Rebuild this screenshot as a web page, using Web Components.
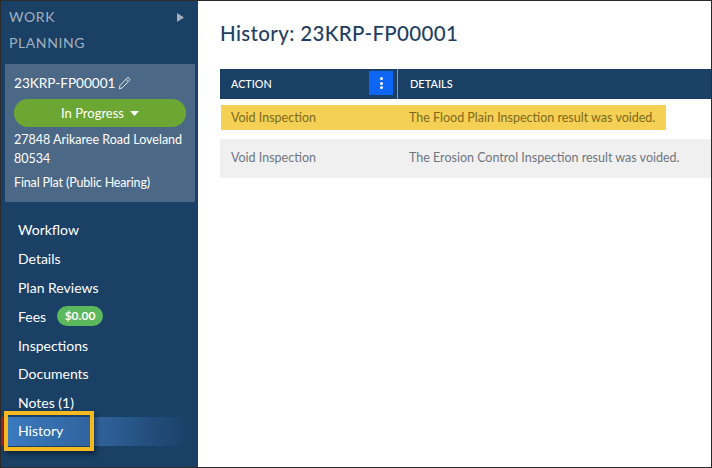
<!DOCTYPE html>
<html>
<head>
<meta charset="utf-8">
<style>
  html, body { margin: 0; height: 100%; }
  body { font-family: "Lato", "Liberation Sans", sans-serif; overflow: hidden; }
</style>
</head>
<body>
<app-shell>
  <side-nav slot="side"></side-nav>
  <history-view slot="main"></history-view>
</app-shell>

<script>
class AppShell extends HTMLElement {
  connectedCallback() {
    const shadow = this.attachShadow({ mode: "open" });
    shadow.innerHTML = `
      <style>
        :host {
          display: grid;
          grid-template-columns: 197px 1fr;
          box-sizing: border-box;
          width: 712px;
          height: 468px;
          border: 1px solid #2b2b2b;
          background: #fff;
        }
      </style>
      <slot name="side"></slot>
      <slot name="main"></slot>
    `;
  }
}

class SideNav extends HTMLElement {
  connectedCallback() {
    const shadow = this.attachShadow({ mode: "open" });
    const items = [
      ["Workflow"], ["Details"], ["Plan Reviews"], ["Fees", "badge"],
      ["Inspections"], ["Documents"], ["Notes (1)"], ["History", "active"],
    ];
    const rows = items.map(([label, kind]) => {
      if (kind === "badge") return `<a>${label}<span class="badge">$0.00</span></a>`;
      if (kind === "active") return `<a class="active"><span class="focus">${label}</span></a>`;
      return `<a>${label}</a>`;
    }).join("");
    shadow.innerHTML = `
      <style>
        :host {
          display: block;
          height: 100%;
          background: #1a4066;
          color: #fff;
          font-size: 14px;
          overflow: hidden;
        }
        .module {
          display: flex;
          justify-content: space-between;
          padding: 0 14px 0 8px;
          color: #a3b0be;
          font-size: 14px;
          letter-spacing: 0.6px;
          line-height: 26px;
        }
        .module.top { padding-top: 3px; }
        .module svg { margin-top: 9px; }
        .card {
          margin: 8px 3px 0 4px;
          padding: 9px 0 0 9px;
          height: 138px;
          box-sizing: border-box;
          background: #4c6887;
          font-size: 12.5px;
        }
        .num { display: flex; align-items: center; gap: 3px; font-size: 13.6px; line-height: 20px; }
        .status {
          display: flex; align-items: center; justify-content: center; gap: 6px;
          height: 28px; margin: 6px 9px 0 0;
          border-radius: 14px;
          background: #6ca633;
          font-size: 13px;
        }
        .addr { margin-top: 3px; line-height: 19px; }
        .type { margin-top: 5px; line-height: 19px; letter-spacing: -0.15px; }
        nav { display: flex; flex-direction: column; margin-top: 13.5px; }
        a {
          display: flex; align-items: center;
          height: 28.8px;
          padding-left: 17px;
          font-size: 14px;
        }
        .badge {
          margin-left: 11px; padding: 0 7.5px;
          height: 20px; line-height: 20px;
          border-radius: 10px;
          background: #5cb85c;
          font-size: 12px; font-weight: 700;
        }
        a.active {
          height: 29px;
          padding-left: 0;
          border-left: 3px solid #a32020;
          background: linear-gradient(90deg, #3a7bc0 0%, #2f6199 50%, #1a4066 95%);
        }
        .focus {
          box-sizing: border-box;
          width: 90px; height: 40px;
          margin-top: -1px;
          padding-left: 10px;
          line-height: 32px;
          border: 4px solid #f5b922;
          box-shadow: 2px 3px 5px rgba(0,0,0,.45);
        }
      </style>
      <div class="module top">WORK
        <svg width="7" height="9" viewBox="0 0 7 9"><path d="M0 0l7 4.5L0 9z" fill="#a3b0be"/></svg>
      </div>
      <div class="module">PLANNING</div>
      <div class="card">
        <div class="num">23KRP-FP00001
          <svg width="13" height="14" viewBox="0 0 13 14" fill="none" stroke="#dfe5ea" stroke-width="1"><path d="M2 9.5L9 2.2a1.3 1.3 0 0 1 2 0l.4.4a1.3 1.3 0 0 1 0 1.9L4.3 11.8 1.3 12.8zM8 3.3l2.6 2.6"/></svg>
        </div>
        <div class="status">In Progress
          <svg width="9" height="5" viewBox="0 0 9 5"><path d="M0 0h9L4.5 5z" fill="#fff"/></svg>
        </div>
        <div class="addr">27848 Arikaree Road Loveland 80534</div>
        <div class="type">Final Plat (Public Hearing)</div>
      </div>
      <nav>${rows}</nav>
    `;
  }
}

class HistoryView extends HTMLElement {
  connectedCallback() {
    const shadow = this.attachShadow({ mode: "open" });
    shadow.innerHTML = `
      <style>
        :host { display: block; padding: 0 0 0 22px; overflow: hidden; }
        h1 {
          margin: 19px 0 0;
          color: #1f3f63;
          font-size: 20.5px; font-weight: 500; line-height: 26px;
          letter-spacing: 0.36px;
        }
        .head {
          display: grid; grid-template-columns: 178px 1fr;
          height: 30px; margin-top: 23px;
          background: #1a4066; color: #fff;
          font-size: 10.8px; font-weight: 500;
        }
        .head > div { display: flex; align-items: center; padding: 0 0 2px 11px; }
        .head .a { justify-content: space-between; padding-right: 4px; border-right: 1px solid #8a9bad; }
        .head .d { padding-left: 12px; font-size: 11px; }
        .kebab {
          display: flex; flex-direction: column; align-items: center; justify-content: center; gap: 1.5px;
          width: 24px; height: 24px;
          background: #0d66f5;
        }
        .kebab i { width: 3px; height: 3px; border-radius: 50%; background: #fff; }
        .row { display: grid; font-size: 12.5px; align-items: center; }
        .row.hl {
          width: 445px; height: 25px; margin: 6px 0 0 1px;
          background: #f4d054; color: #7d6a1e;
          grid-template-columns: 178px auto;
          padding-left: 10px; box-sizing: border-box;
        }
        .row.plain {
          height: 37px; margin-top: 9px; padding-bottom: 2px;
          background: #f0f0f0; color: #6f7580;
          padding-left: 11px;
          grid-template-columns: 178px auto;
        }
      </style>
      <h1>History: 23KRP-FP00001</h1>
      <div class="head">
        <div class="a">ACTION<span class="kebab"><i></i><i></i><i></i></span></div>
        <div class="d">DETAILS</div>
      </div>
      <div class="row hl"><span>Void Inspection</span><span>The Flood Plain Inspection result was voided.</span></div>
      <div class="row plain"><span>Void Inspection</span><span>The Erosion Control Inspection result was voided.</span></div>
    `;
  }
}

customElements.define("app-shell", AppShell);
customElements.define("side-nav", SideNav);
customElements.define("history-view", HistoryView);
</script>
</body>
</html>
